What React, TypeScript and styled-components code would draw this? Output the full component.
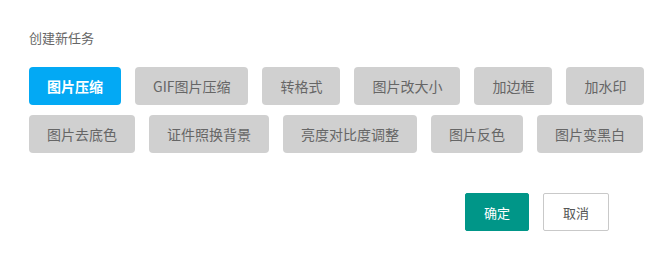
import styled, { createGlobalStyle } from "styled-components";

const GlobalStyle = createGlobalStyle`
  html, body {
    margin: 0;
    padding: 0;
    background: #ffffff;
  }
  body {
    font-family: "Noto Sans CJK SC", "Noto Sans", sans-serif;
  }
`;

const Dialog = styled.div`
  width: 664px;
  height: 260px;
  box-sizing: border-box;
  padding: 29px 14px 0 29px;
  display: flex;
  flex-direction: column;
`;

const Title = styled.div`
  font-size: 13px;
  line-height: 18px;
  color: #666;
`;

const TaskList = styled.div`
  margin-top: 20px;
  width: 620px;
  display: flex;
  flex-wrap: wrap;
  gap: 10px 14px;
`;

const TaskBtn = styled.button<{ $active?: boolean }>`
  height: 38px;
  padding: 0 18px;
  border: none;
  border-radius: 4px;
  font-family: inherit;
  font-size: 14px;
  cursor: pointer;
  background: ${(props) => (props.$active ? "#03a9f4" : "#d0d0d0")};
  color: ${(props) => (props.$active ? "#fff" : "#666")};
  font-weight: ${(props) => (props.$active ? "bold" : "normal")};
`;

const Footer = styled.div`
  margin-top: 40px;
  padding-right: 41px;
  display: flex;
  justify-content: flex-end;
  gap: 14px;
`;

const FooterBtn = styled.button<{ $primary?: boolean }>`
  height: 38px;
  width: ${(props) => (props.$primary ? "64px" : "66px")};
  box-sizing: border-box;
  border-radius: 2px;
  font-family: inherit;
  font-size: 13px;
  cursor: pointer;
  border: 1px solid ${(props) => (props.$primary ? "#009688" : "#c9c9c9")};
  background: ${(props) => (props.$primary ? "#009688" : "#fff")};
  color: ${(props) => (props.$primary ? "#fff" : "#555")};
`;

const tasks = [
  "图片压缩",
  "GIF图片压缩",
  "转格式",
  "图片改大小",
  "加边框",
  "加水印",
  "图片去底色",
  "证件照换背景",
  "亮度对比度调整",
  "图片反色",
  "图片变黑白",
];

function App() {
  return (
    <>
      <GlobalStyle />
      <Dialog>
        <Title>创建新任务</Title>
        <TaskList>
          {tasks.map((t, i) => (
            <TaskBtn key={t} $active={i === 0}>
              {t}
            </TaskBtn>
          ))}
        </TaskList>
        <Footer>
          <FooterBtn $primary>确定</FooterBtn>
          <FooterBtn>取消</FooterBtn>
        </Footer>
      </Dialog>
    </>
  );
}

export default App;
